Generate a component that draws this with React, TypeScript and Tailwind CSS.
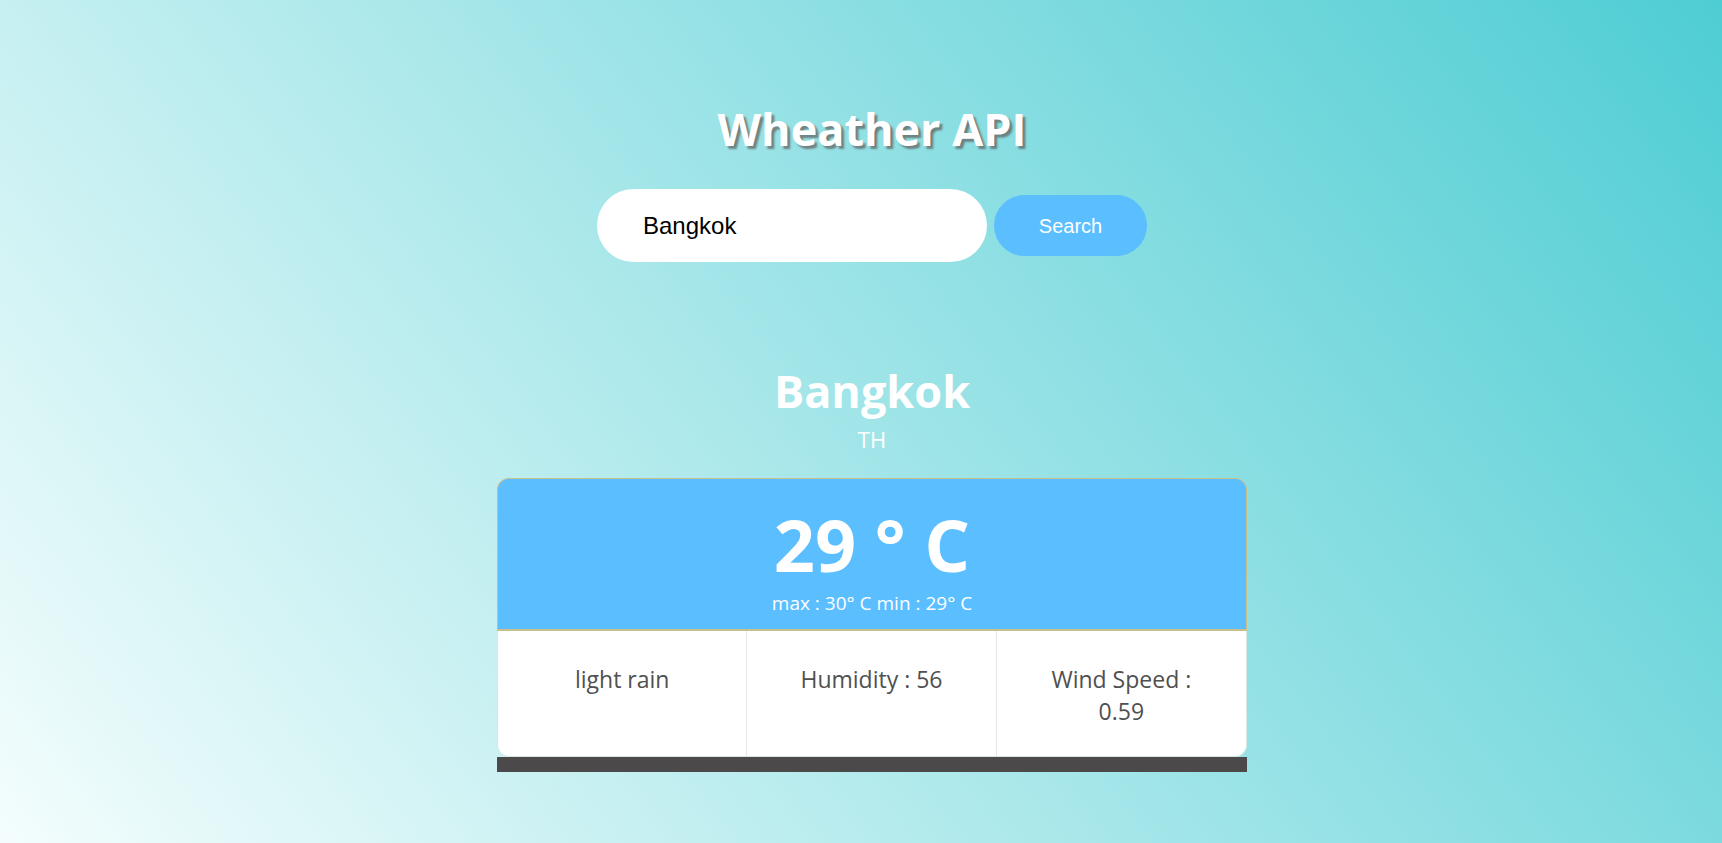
import { useState } from 'react'

const weather = {
  city: 'Bangkok',
  country: 'TH',
  temp: 29,
  max: 30,
  min: 29,
  description: 'light rain',
  humidity: 56,
  wind: 0.59,
}

export default function App() {
  const [query, setQuery] = useState('Bangkok')
  const w = weather

  return (
    <div className="min-h-screen w-full bg-[linear-gradient(52deg,#f4fdfd,#4ecdd3)] font-['Open_Sans','Noto_Sans',sans-serif]">
      <div className="flex flex-col items-center pt-[98px] pl-[22px]">
        <h1 className="text-[45px] leading-[61px] font-bold text-white [text-shadow:3px_3px_2px_rgba(90,80,80,0.65)]">
          Wheather API
        </h1>

        <div className="mt-[30px] flex items-center gap-[7px]">
          <input
            value={query}
            onChange={(e) => setQuery(e.target.value)}
            className="h-[73px] w-[390px] rounded-full bg-white pl-[46px] pr-6 font-['Liberation_Sans',Arial,sans-serif] text-[24px] text-black outline-none"
          />
          <button className="h-[61px] w-[153px] rounded-full bg-[#5abeff] font-['Liberation_Sans',Arial,sans-serif] text-[20px] text-white">
            Search
          </button>
        </div>

        <h2 className="mt-[99px] text-[45px] leading-[60px] font-bold text-white">{w.city}</h2>
        <p className="mt-[3px] text-[22px] leading-[30px] text-white">{w.country}</p>

        <div className="mt-[24px] w-[750px]">
          <div className="rounded-t-xl border border-b-2 border-[#c9bf8c] bg-[#5abeff] pt-[25px] pb-[13px] text-center text-white">
            <div className="text-[72px] leading-[80px] font-bold">{w.temp} ° C</div>
            <div className="mt-[6px] text-[19px] leading-[26px]">
              max : {w.max}° C min : {w.min}° C
            </div>
          </div>
          <div className="grid h-[126px] grid-cols-3 overflow-hidden rounded-b-xl border-x border-b border-[#d8e6e8] bg-white text-center text-[23px] leading-[32px] text-[#505050]">
            <div className="border-r border-[#e6e6e6] px-10 pt-[32px]">{w.description}</div>
            <div className="border-r border-[#e6e6e6] px-10 pt-[32px]">Humidity : {w.humidity}</div>
            <div className="px-10 pt-[32px]">Wind Speed : {w.wind}</div>
          </div>
          <div className="h-[15px] bg-[#4b4949]" />
        </div>
      </div>
    </div>
  )
}
